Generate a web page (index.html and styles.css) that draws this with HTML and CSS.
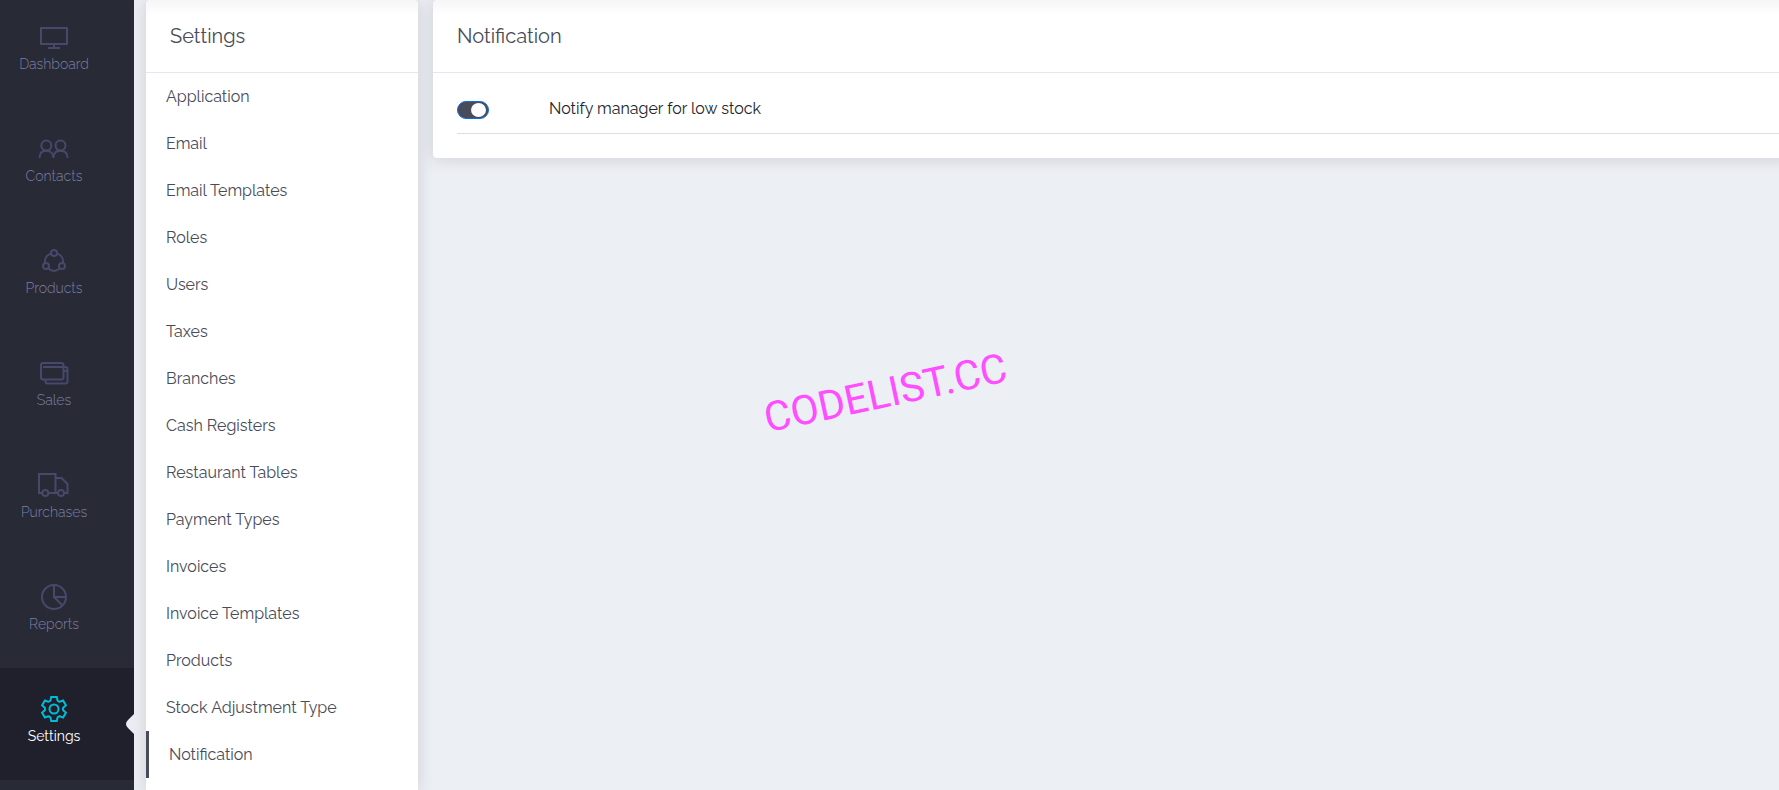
FILE: index.html
```html
<!DOCTYPE html>
<html lang="en">
<head>
<meta charset="utf-8">
<meta name="viewport" content="width=device-width, initial-scale=1">
<title>Settings - Notification</title>
<link rel="stylesheet" href="styles.css">
</head>
<body>
<div class="app">
  <nav class="sidebar" aria-label="Main">
    <a class="nav-item" href="#dashboard">
      <svg class="nav-icon" viewBox="0 0 32 28" aria-hidden="true"><path d="M3 5H29V21H3ZM16 21V25M10 25H22"/></svg>
      <span>Dashboard</span>
    </a>
    <a class="nav-item" href="#contacts">
      <svg class="nav-icon" viewBox="0 0 32 28" aria-hidden="true"><circle cx="8.300" cy="10.500" r="5"/><circle cx="22.500" cy="10.500" r="5"/><path d="M1.500 23C1.500 18.500 4 15.800 8.300 15.800S15.400 18.500 15.400 23C15.400 18.500 18 15.800 22.500 15.800S29.500 18.500 29.500 23"/></svg>
      <span>Contacts</span>
    </a>
    <a class="nav-item" href="#products">
      <svg class="nav-icon" viewBox="0 0 32 28" aria-hidden="true"><circle cx="16" cy="6" r="3"/><circle cx="8" cy="19" r="3"/><circle cx="24" cy="19" r="3"/><path d="M13 6.500C8.500 8 6.500 12 7 16M19 6.500C23.500 8 25.500 12 25 16M10.500 21.500C13.500 24.700 18.500 24.700 21.500 21.500"/></svg>
      <span>Products</span>
    </a>
    <a class="nav-item" href="#sales">
      <svg class="nav-icon" viewBox="0 0 32 28" aria-hidden="true"><rect x="3" y="4" width="22.500" height="16.500" rx="2"/><path d="M5 8H25.500M25.500 8H27.500Q29.500 8 29.500 10V22.500Q29.500 24.500 27.500 24.500H9.500Q7.500 24.500 7.500 22.500V20.500M25.500 12H29.500"/></svg>
      <span>Sales</span>
    </a>
    <a class="nav-item" href="#purchases">
      <svg class="nav-icon" viewBox="0 0 32 28" aria-hidden="true"><circle cx="7.300" cy="22" r="3"/><circle cx="23" cy="22" r="3"/><path d="M4 22H1V3H17.500V22M10.500 22H20M17.500 7H23.500L29.500 13V22H26"/></svg>
      <span>Purchases</span>
    </a>
    <a class="nav-item" href="#reports">
      <svg class="nav-icon" viewBox="0 0 32 28" aria-hidden="true"><circle cx="16" cy="14" r="12"/><path d="M16 2V14H28M16 14L24.500 22.500"/></svg>
      <span>Reports</span>
    </a>
    <a class="nav-item nav-item-active" href="#settings" aria-current="page">
      <svg class="nav-icon" viewBox="0 0 32 28" aria-hidden="true"><circle cx="16" cy="14" r="4.500"/><path d="M13.200 1.900H18.800L19.500 5.400Q20.500 6.800 21.700 6.700L25.100 5.500L27.900 10.400L25.200 12.700Q24.600 14 25.200 15.300L27.900 17.600L25.100 22.500L21.700 21.300Q20.500 21.200 19.500 22.600L18.800 26.100H13.200L12.500 22.600Q11.500 21.200 10.300 21.300L6.900 22.500L4.100 17.600L6.800 15.300Q7.400 14 6.800 12.700L4.100 10.400L6.900 5.500L10.300 6.700Q11.500 6.800 12.500 5.400Z"/></svg>
      <span>Settings</span>
      <svg class="nav-arrow" viewBox="0 0 8 20" aria-hidden="true"><path d="M8 0L2 6Q-2 10 2 14L8 20Z"/></svg>
    </a>
  </nav>

  <div class="content">
    <section class="card menu-card">
      <h2 class="card-title">Settings</h2>
      <ul class="menu">
        <li><a class="menu-link" href="#application">Application</a></li>
        <li><a class="menu-link" href="#email">Email</a></li>
        <li><a class="menu-link" href="#email-templates">Email Templates</a></li>
        <li><a class="menu-link" href="#roles">Roles</a></li>
        <li><a class="menu-link" href="#users">Users</a></li>
        <li><a class="menu-link" href="#taxes">Taxes</a></li>
        <li><a class="menu-link" href="#branches">Branches</a></li>
        <li><a class="menu-link" href="#cash-registers">Cash Registers</a></li>
        <li><a class="menu-link" href="#restaurant-tables">Restaurant Tables</a></li>
        <li><a class="menu-link" href="#payment-types">Payment Types</a></li>
        <li><a class="menu-link" href="#invoices">Invoices</a></li>
        <li><a class="menu-link" href="#invoice-templates">Invoice Templates</a></li>
        <li><a class="menu-link" href="#product-settings">Products</a></li>
        <li><a class="menu-link" href="#stock-adjustment-type">Stock Adjustment Type</a></li>
        <li><a class="menu-link menu-link-active" href="#notification" aria-current="page">Notification</a></li>
      </ul>
    </section>

    <main class="card main-card">
      <h2 class="card-title">Notification</h2>
      <div class="card-body">
        <div class="setting-row">
          <input class="toggle" type="checkbox" id="low-stock" checked>
          <label for="low-stock">Notify manager for low stock</label>
        </div>
      </div>
    </main>
  </div>
</div>
<div class="watermark"><span class="watermark-text">CODELIST.CC</span></div>
</body>
</html>
```
FILE: styles.css
```css
* {
  box-sizing: border-box;
}

body {
  margin: 0;
  height: 100vh;
  overflow: hidden;
  background: #eceff4;
  color: #484b58;
  font-family: Raleway, Lato, sans-serif;
  font-size: 16px;
  line-height: 24px;
}

a {
  color: inherit;
  text-decoration: none;
}

.app {
  display: flex;
  height: 100%;
}

/* Main navigation */
.sidebar {
  flex: none;
  width: 134px;
  margin-top: -4px;
  background: #282a36;
}

.nav-item {
  position: relative;
  display: flex;
  flex-direction: column;
  align-items: center;
  height: 112px;
  padding: 27px 26px 0 0;
  color: #7d7ea3;
  font-size: 14px;
  font-weight: 300;
}

.nav-icon {
  flex: none;
  width: 32px;
  height: 28px;
  margin-bottom: 1px;
  fill: none;
  stroke: #46496a;
  stroke-width: 2;
}

.nav-item-active {
  background: #1f202c;
  color: #fff;
  font-weight: 400;
}

.nav-item-active .nav-icon {
  stroke: #00bcd4;
}

.nav-arrow {
  position: absolute;
  top: 46px;
  right: 0;
  width: 8px;
  height: 20px;
  fill: #ebedf2;
}

/* Cards */
.content {
  flex: 1;
  display: flex;
  align-items: flex-start;
  gap: 15px;
  min-width: 0;
  padding-left: 12px;
  overflow: hidden;
}

.card {
  background: linear-gradient(#f6f6f6, #fff 16px);
  border-radius: 4px;
  box-shadow: 0 1px 15px 1px rgba(69, 65, 78, 0.16);
}

.menu-card {
  flex: none;
  width: 272px;
  min-height: 100vh;
  border-radius: 4px 4px 0 0;
}

.main-card {
  flex: 1;
  margin-right: -16px;
}

.card-title {
  margin: 0;
  padding: 24px;
  border-bottom: 1px solid #e6e6ec;
  color: #484b58;
  font-size: 20px;
  font-weight: 400;
  line-height: 24px;
}

/* Settings menu */
.menu {
  margin: 0;
  padding: 0;
  list-style: none;
}

.menu-link {
  display: block;
  padding: 12px 20px 11px;
}

.menu-link-active {
  border-left: 3px solid #484b58;
}

/* Notification settings */
.card-body {
  padding: 24px 0 24px 24px;
}

.setting-row {
  display: flex;
  align-items: flex-start;
  gap: 60px;
  padding-bottom: 12px;
  border-bottom: 1px solid #dcdfe2;
  color: #212529;
}

.toggle {
  flex: none;
  display: flex;
  justify-content: flex-end;
  align-items: center;
  width: 32px;
  height: 18px;
  margin: 4px 0 0;
  padding: 0 2px;
  appearance: none;
  background: #484b58;
  border: 1px solid #0b6fe8;
  border-radius: 9px;
}

.toggle::before {
  content: "";
  width: 15px;
  height: 14px;
  border-radius: 50%;
  background: #fff;
}

.toggle:not(:checked) {
  justify-content: flex-start;
  background: #b8bac4;
}

/* Watermark over the page */
.watermark {
  position: absolute;
  inset: 0;
  display: grid;
  place-items: center;
  padding: 0 8px 4px 0;
  pointer-events: none;
}

.watermark-text {
  color: #ff4dff;
  font-family: Roboto, "Liberation Sans", sans-serif;
  font-size: 41px;
  line-height: 48px;
  transform: rotate(-12deg);
}
```
